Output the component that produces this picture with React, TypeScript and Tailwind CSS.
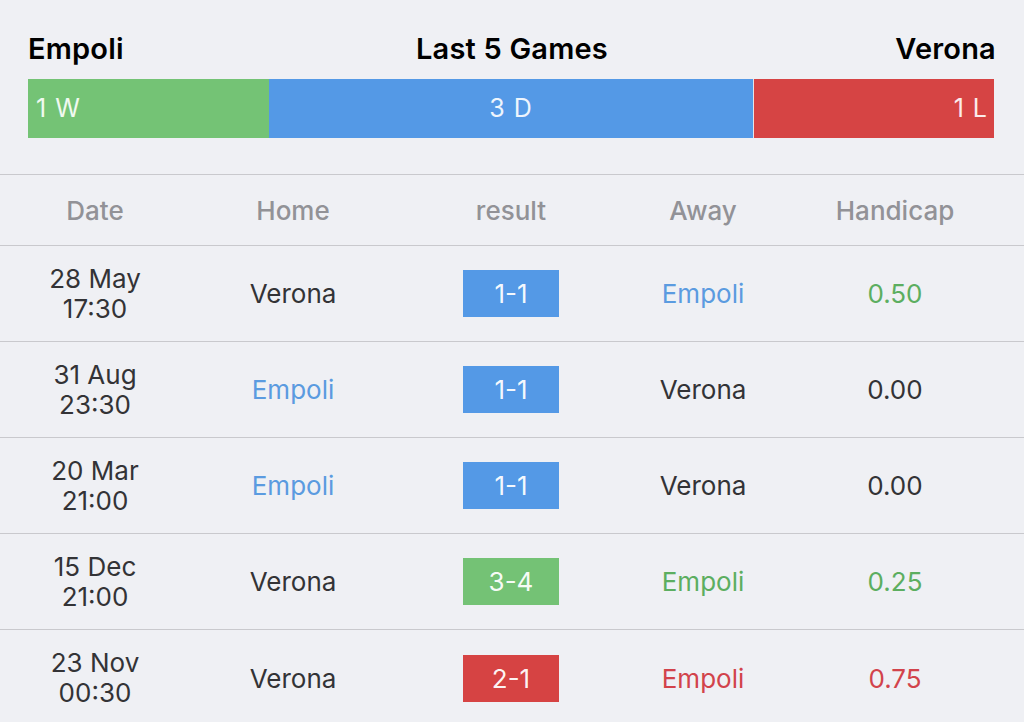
import React from "react";

type Row = {
  d1: string;
  d2: string;
  home: string;
  homeCls: string;
  score: string;
  badge: string;
  away: string;
  awayCls: string;
  hc: string;
  hcCls: string;
};

const DARK = "text-[#333336]";
const BLUE = "text-[#5b9be0]";
const GREEN = "text-[#5cae60]";
const RED = "text-[#d2434b]";

const rows: Row[] = [
  { d1: "28 May", d2: "17:30", home: "Verona", homeCls: DARK, score: "1-1", badge: "bg-[#5499e6]", away: "Empoli", awayCls: BLUE, hc: "0.50", hcCls: GREEN },
  { d1: "31 Aug", d2: "23:30", home: "Empoli", homeCls: BLUE, score: "1-1", badge: "bg-[#5499e6]", away: "Verona", awayCls: DARK, hc: "0.00", hcCls: DARK },
  { d1: "20 Mar", d2: "21:00", home: "Empoli", homeCls: BLUE, score: "1-1", badge: "bg-[#5499e6]", away: "Verona", awayCls: DARK, hc: "0.00", hcCls: DARK },
  { d1: "15 Dec", d2: "21:00", home: "Verona", homeCls: DARK, score: "3-4", badge: "bg-[#74c275]", away: "Empoli", awayCls: GREEN, hc: "0.25", hcCls: GREEN },
  { d1: "23 Nov", d2: "00:30", home: "Verona", homeCls: DARK, score: "2-1", badge: "bg-[#d64343]", away: "Empoli", awayCls: RED, hc: "0.75", hcCls: RED },
];

const GRID = "grid grid-cols-[190px_206px_230px_154px_230px]";

export default function App() {
  return (
    <div
      className="w-[1024px] h-[722px] overflow-hidden bg-[#eff0f4]"
      style={{ fontFamily: "Inter, 'Noto Sans', 'Liberation Sans', sans-serif" }}
    >
      <div className="px-[28px] pt-[30px]">
        <div className="flex items-center justify-between h-[38px] text-[29px] font-semibold text-black tracking-[0.2px]">
          <span className="w-[220px]">Empoli</span>
          <span>Last 5 Games</span>
          <span className="w-[220px] text-right">Verona</span>
        </div>
        <div className="mt-[11px] flex h-[59px] w-[966px] text-[25px] text-white/90 tracking-[1px]">
          <div className="w-[241px] bg-[#74c375] flex items-center pl-[8px]">1 W</div>
          <div className="w-[484px] bg-[#5499e6] flex items-center justify-center">3 D</div>
          <div className="w-[1px] bg-[#e4e6ea]" />
          <div className="w-[240px] bg-[#d64444] flex items-center justify-end pr-[6px]">1 L</div>
        </div>
      </div>

      <div className="mt-[36px] border-t border-[#c9c9cd]">
        <div className={`${GRID} h-[71px] items-center text-[26px] font-medium text-[#929297] border-b border-[#c9c9cd]`}>
          <div className="text-center">Date</div>
          <div className="text-center">Home</div>
          <div className="text-center">result</div>
          <div className="text-center">Away</div>
          <div className="text-center">Handicap</div>
        </div>
        {rows.map((r, i) => (
          <div
            key={i}
            className={`${GRID} h-[96px] items-center text-[26px] ${i < rows.length - 1 ? "border-b border-[#c9c9cd]" : ""}`}
          >
            <div className={`text-center leading-[30px] ${DARK}`}>
              <div>{r.d1}</div>
              <div>{r.d2}</div>
            </div>
            <div className={`text-center ${r.homeCls}`}>{r.home}</div>
            <div className="flex justify-center">
              <div className={`w-[96px] h-[47px] flex items-center justify-center text-white/95 ${r.badge}`}>
                {r.score}
              </div>
            </div>
            <div className={`text-center ${r.awayCls}`}>{r.away}</div>
            <div className={`text-center ${r.hcCls}`}>{r.hc}</div>
          </div>
        ))}
      </div>
    </div>
  );
}
